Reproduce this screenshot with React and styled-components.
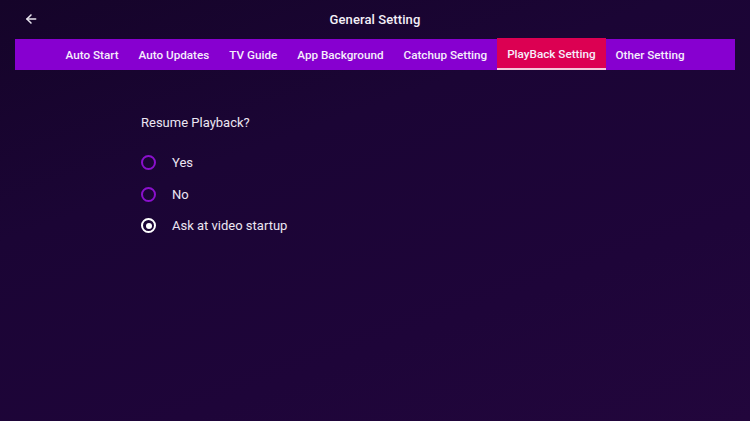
import React, { useState } from 'react';
import styled, { createGlobalStyle } from 'styled-components';

const GlobalStyle = createGlobalStyle`
  html, body {
    margin: 0;
    padding: 0;
    background: #1c0533;
  }
  body {
    font-family: Roboto, "Noto Sans", "Liberation Sans", sans-serif;
    color: #fff;
  }
`;

const Page = styled.div`
  width: 750px;
  height: 421px;
  overflow: hidden;
  background: linear-gradient(160deg, #150429 0%, #1b0535 35%, #1e0539 70%, #22063c 100%);
  display: flex;
  flex-direction: column;
`;

const Header = styled.div`
  height: 39px;
  display: flex;
  align-items: center;
  position: relative;
  justify-content: center;
  .back {
    position: absolute;
    left: 24px;
    top: 12px;
    width: 14px;
    height: 14px;
  }
`;

const Title = styled.div`
  font-size: 13px;
  font-weight: 500;
  color: #f4f0f8;
  letter-spacing: 0.1px;
`;

const TabBar = styled.div`
  margin: 0 15px;
  height: 31px;
  background: #8700d0;
  display: flex;
  justify-content: center;
  align-items: stretch;
`;

const Tab = styled.div`
  padding: 0 10px;
  display: flex;
  align-items: center;
  font-size: 11.7px;
  font-weight: 500;
  color: #f6eefc;
  background: ${p => (p.active ? '#dc0052' : 'transparent')};
  margin-top: ${p => (p.active ? '-1px' : '0')};
  box-shadow: ${p => (p.active ? 'inset 0 -2px 0 #f2c8d8' : 'none')};
  cursor: pointer;
`;

const Content = styled.div`
  padding: 45px 0 0 141px;
  display: flex;
  flex-direction: column;
`;

const Question = styled.div`
  font-size: 13px;
  color: #ece6f2;
  margin-bottom: 17px;
`;

const Option = styled.label`
  display: flex;
  align-items: center;
  gap: 16px;
  height: 31.5px;
  font-size: 13px;
  color: #ece6f2;
  cursor: pointer;
`;

const Radio = styled.span`
  width: 11px;
  height: 11px;
  border-radius: 50%;
  border: 2px solid ${p => (p.checked ? '#ffffff' : '#8a10cc')};
  display: flex;
  align-items: center;
  justify-content: center;
  &::after {
    content: '';
    width: 6px;
    height: 6px;
    border-radius: 50%;
    background: #fff;
    display: ${p => (p.checked ? 'block' : 'none')};
  }
`;

const tabs = ['Auto Start', 'Auto Updates', 'TV Guide', 'App Background', 'Catchup Setting', 'PlayBack Setting', 'Other Setting'];
const options = ['Yes', 'No', 'Ask at video startup'];

const App = () => {
  const [active, setActive] = useState('PlayBack Setting');
  const [choice, setChoice] = useState('Ask at video startup');

  return (
    <>
      <GlobalStyle />
      <Page>
        <Header>
          <svg className='back' viewBox="0 0 24 24" fill="none" stroke="#e8e4ee" strokeWidth="2.6" strokeLinecap="round" strokeLinejoin="round">
            <path d="M20 12H5" />
            <path d="M12 5l-7 7 7 7" />
          </svg>
          <Title>General Setting</Title>
        </Header>
        <TabBar>
          {tabs.map(t => (
            <Tab key={t} active={t === active} onClick={() => setActive(t)}>{t}</Tab>
          ))}
        </TabBar>
        <Content>
          <Question>Resume Playback?</Question>
          {options.map(o => (
            <Option key={o} onClick={() => setChoice(o)}>
              <Radio checked={o === choice} />
              {o}
            </Option>
          ))}
        </Content>
      </Page>
    </>
  );
};

export default App;
